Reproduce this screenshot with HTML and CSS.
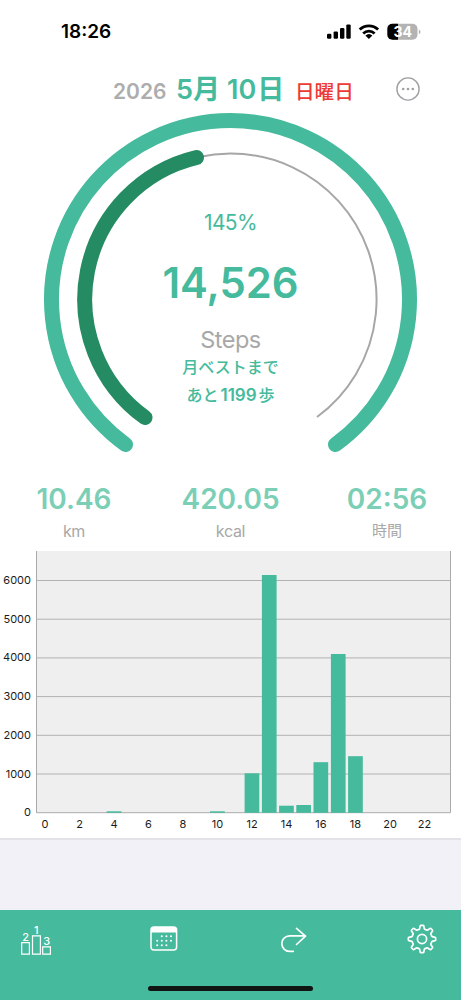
FILE: index.html
```html
<!DOCTYPE html>
<html lang="ja">
<head>
<meta charset="utf-8">
<title>Steps</title>
<link rel="stylesheet" href="styles.css">
</head>
<body>
<div class="screen">
  <header class="status">
    <span class="clock">18:26</span>
    <svg class="status-icons" width="96" height="18" viewBox="326 22.600 96 18">
      <rect x="327" y="33.3" width="4.4" height="5" rx="1.2"/>
      <rect x="333.6" y="31" width="4.4" height="7.3" rx="1.2"/>
      <rect x="340" y="27.6" width="4.4" height="10.7" rx="1.2"/>
      <rect x="346.3" y="24" width="4.4" height="14.3" rx="1.2"/>
      <g fill="none" stroke="#000" stroke-width="2.8">
        <path d="M359.7 29.2a13.2 13.2 0 0 1 18.4 0"/>
        <path d="M363.2 33a8.3 8.3 0 0 1 11.4 0"/>
      </g>
      <path d="M365.4 35.1a5.2 5.2 0 0 1 7 0L368.900 38.600z"/>
      <path d="M392.500 23.300h20a5 5 0 0 1 5 5v6a5 5 0 0 1-5 5h-20z" fill="#b3b3b3"/>
      <path d="M398 23.300h-5.700a5 5 0 0 0-5 5v6a5 5 0 0 0 5 5h5.700z"/>
      <path d="M418.900 29v4.800q1.600-.7 1.600-2.400t-1.600-2.400z" fill="#b3b3b3"/>
      <text class="battery" x="402.700" y="36.300">34</text>
    </svg>
  </header>

  <div class="date">
    <span class="year">2026</span>
    <span class="day">5月<span class="num">10</span>日</span>
    <span class="weekday">日曜日</span>
    <svg class="more" width="26" height="26" viewBox="0 0 26 26">
      <circle cx="13" cy="13" r="11.100" fill="none" stroke="#a0a0a4" stroke-width="1.400"/>
      <g fill="#a0a0a4"><circle cx="8.200" cy="13" r="1.300"/><circle cx="13" cy="13" r="1.300"/><circle cx="17.800" cy="13" r="1.300"/></g>
    </svg>
  </div>

  <section class="gauge">
    <svg class="rings" width="461" height="360" viewBox="0 106 461 360" fill="none">
      <path d="M125.500 444.500A179 179 0 1 1 335.500 444.500" stroke="#45ba9c" stroke-width="15" stroke-linecap="round"/>
      <path d="M145 417.500A145.900 145.900 0 1 1 317 417" stroke="#a6a6a6" stroke-width="2"/>
      <path d="M145 417.500A145.900 145.900 0 0 1 196.500 157.500" stroke="#258b63" stroke-width="15" stroke-linecap="round"/>
    </svg>
    <div class="readout">
      <div class="percent">145%</div>
      <div class="count">14,526</div>
      <div class="unit">Steps</div>
      <div class="best">月ベストまで</div>
      <div class="best">あと<span class="remain">1199</span>歩</div>
    </div>
  </section>

  <section class="stats">
    <div class="stat"><b>10.46</b><span>km</span></div>
    <div class="stat"><b>420.05</b><span>kcal</span></div>
    <div class="stat"><b>02:56</b><span class="hours">時間</span></div>
  </section>

  <svg class="chart" width="461" height="291" viewBox="0 547 461 291">
    <rect x="36.500" y="551" width="414" height="261.500" fill="#efefef"/>
    <path d="M36.500 580.500h414M36.500 619.200h414M36.500 657.900h414M36.500 696.600h414M36.500 735.300h414M36.500 774h414" stroke="#b2b2b2"/>
    <path d="M36.500 551v261.700h414V551" fill="none" stroke="#aaa"/>
    <g fill="#45ba9c">
      <rect x="106.700" y="811.300" width="14.800" height="1.500"/>
      <rect x="210" y="811.300" width="14.800" height="1.500"/>
      <rect x="244.600" y="773.300" width="14.700" height="39.500"/>
      <rect x="261.900" y="575" width="14.700" height="237.800"/>
      <rect x="279.100" y="805.700" width="14.700" height="7.100"/>
      <rect x="296.300" y="805" width="14.700" height="7.800"/>
      <rect x="313.500" y="762.200" width="14.700" height="50.600"/>
      <rect x="330.900" y="654" width="14.700" height="158.800"/>
      <rect x="348.100" y="756.200" width="14.700" height="56.600"/>
    </g>
    <g class="axis end">
      <text x="31" y="584">6000</text><text x="31" y="622.700">5000</text><text x="31" y="661.400">4000</text>
      <text x="31" y="700.100">3000</text><text x="31" y="738.800">2000</text><text x="31" y="777.500">1000</text><text x="31" y="816.200">0</text>
    </g>
    <g class="axis mid">
      <text x="45" y="828">0</text><text x="79.500" y="828">2</text><text x="114" y="828">4</text><text x="148.500" y="828">6</text>
      <text x="183" y="828">8</text><text x="217.500" y="828">10</text><text x="252" y="828">12</text><text x="286.500" y="828">14</text>
      <text x="321" y="828">16</text><text x="355.500" y="828">18</text><text x="390" y="828">20</text><text x="424.500" y="828">22</text>
    </g>
  </svg>

  <div class="spacer"></div>

  <footer class="tabbar">
    <nav class="tabs">
      <svg width="34" height="34" viewBox="19 922 34 34" fill="none" stroke="#fff" stroke-width="1.200">
        <path d="M21.700 941.600h7.700v11.600h-7.700zM32.500 934.900h7.900v18.300h-7.900zM42.700 945.900h7.700v7.300h-7.700z"/>
        <g class="rank"><text x="25.700" y="940">2</text><text x="36.300" y="933">1</text><text x="46.700" y="944.300">3</text></g>
      </svg>
      <svg width="34" height="30" viewBox="149 923 34 30">
        <rect x="151" y="926.900" width="25.600" height="23.200" rx="3" fill="none" stroke="#fff" stroke-width="1.500"/>
        <path d="M151 932.500v-2.500a3 3 0 0 1 3-3h19.600a3 3 0 0 1 3 3v2.500z" fill="#fff"/>
        <path d="M161.800 936.200h9.300M157.200 940.700h13.900M157.200 945.200h9.300" stroke="#fff" stroke-width="2.100" stroke-linecap="round" stroke-dasharray="0 4.600" fill="none"/>
      </svg>
      <svg width="30" height="30" viewBox="280 923 30 30" fill="none" stroke="#fff" stroke-width="1.700" stroke-linecap="round" stroke-linejoin="round">
        <path d="M293.300 951.300H289.500A7.700 7.700 0 0 1 289.500 935.900H305.500M296.500 928.300L305.500 936.100L296.500 944.500"/>
      </svg>
      <svg width="32" height="32" viewBox="-16 -16 32 32" fill="none" stroke="#fff" stroke-width="1.700" stroke-linejoin="round">
        <path id="gear" d=""/>
        <circle r="4.600"/>
      </svg>
    </nav>
    <div class="home"></div>
  </footer>
</div>
<script src="gear.js"></script>
</body>
</html>
```
FILE: gear.js
```js
// Eight-toothed cog outline: rounded valleys between narrow teeth.
function at(deg, r) {
  var a = deg * Math.PI / 180;
  return (Math.sin(a) * r).toFixed(2) + ' ' + (-Math.cos(a) * r).toFixed(2);
}
var d = 'M' + at(-9, 12.5);
for (var i = 0; i < 8; i++) {
  var t = i * 45;
  d += 'Q' + at(t - 8, 13.7) + ' ' + at(t - 5, 13.7) +
       'L' + at(t + 5, 13.7) +
       'Q' + at(t + 8, 13.7) + ' ' + at(t + 9, 12.5) +
       'Q' + at(t + 13, 9.4) + ' ' + at(t + 22.5, 10.2) +
       'Q' + at(t + 32, 9.4) + ' ' + at(t + 36, 12.5);
}
document.getElementById('gear').setAttribute('d', d + 'Z');
```
FILE: styles.css
```css
* { box-sizing: border-box; }
body { margin: 0; background: #fff; font-family: Inter, "Noto Sans CJK JP", sans-serif; }
.screen { width: 461px; height: 1000px; display: flex; flex-direction: column; overflow: hidden; }
.screen svg { display: block; flex: none; }
.status { height: 63px; flex: none; display: flex; justify-content: space-between; align-items: center; padding: 0 39px 0 61px; }
.clock { font-size: 19px; font-weight: 600; line-height: 20px; }
.battery { font-size: 14px; font-weight: 700; fill: #fff; text-anchor: middle; }
.date { height: 43px; flex: none; display: flex; align-items: baseline; padding: 10px 40px 0 113px; line-height: 34px; white-space: nowrap; }
.year { width: 63px; font-size: 21px; font-weight: 600; color: #adadad; }
.day { width: 119px; font-size: 27px; font-weight: 600; color: #45ba9c; }
.num { margin: 0 1px 0 7px; }
.weekday { font-size: 19.600px; font-weight: 500; color: #ee3a35; }
.more { align-self: flex-start; margin: 3px 0 0 auto; }
.gauge { display: grid; height: 360px; flex: none; }
.rings, .readout { grid-area: 1 / 1; }
.readout { display: flex; flex-direction: column; align-items: center; padding-top: 102px; color: #45ba9c; }
.percent { font-size: 21px; line-height: 30px; font-weight: 400; letter-spacing: -0.6px; }
.count { font-size: 41.800px; line-height: 50px; margin-top: 20px; font-weight: 600; }
.unit { font-size: 23.500px; line-height: 30px; margin-top: 17px; color: #a8a8a8; letter-spacing: -0.5px; }
.best { font-size: 16px; line-height: 28px; font-weight: 500; margin-top: -2px; }
.best + .best { margin-top: 0; }
.remain { font-size: 17px; font-weight: 600; margin: 0 2px; }
.stats { display: flex; height: 81px; flex: none; justify-content: space-between; padding: 18px 24px 0 24px; }
.stat { width: 100px; display: flex; flex-direction: column; align-items: center; }
.stat b { font-size: 28px; line-height: 30px; font-weight: 600; color: #7bcfb6; }
.stat span { font-size: 16px; line-height: 20px; margin-top: 7px; color: #a8a8a8; letter-spacing: -0.3px; }
.stat .hours { font-size: 15px; letter-spacing: 0; }
.axis { font-size: 11px; fill: #1c1c1c; }
.end { text-anchor: end; }
.mid { text-anchor: middle; }
.spacer { flex: 1; background: #f2f1f8; border-top: 2px solid #e3e3e7; }
.tabbar { height: 90px; flex: none; background: #45ba9c; display: flex; flex-direction: column; align-items: center; }
.tabs { width: 100%; height: 76px; display: flex; justify-content: space-between; align-items: flex-start; padding: 13px 23px 0 19px; }
.rank { font-size: 11px; fill: #fff; stroke: none; font-weight: 500; text-anchor: middle; }
.home { width: 165px; height: 5px; border-radius: 3px; background: #101413; }
```
